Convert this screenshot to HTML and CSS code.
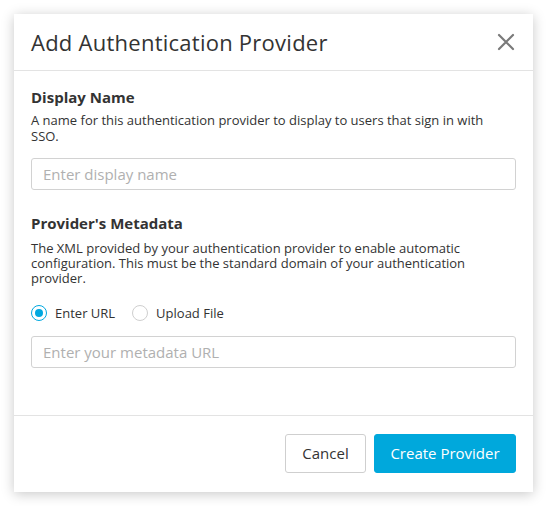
FILE: index.html
```html
<!DOCTYPE html>
<html>
<head>
<meta charset="utf-8">
<link rel="stylesheet" href="styles.css">
</head>
<body>
<div class="modal">
  <div class="modal-header">
    <h1 class="title">Add Authentication Provider</h1>
    <button class="close" aria-label="Close">
      <svg width="18" height="18" viewBox="0 0 18 18"><path d="M2 2 L16 16 M16 2 L2 16" stroke="#7a7a7a" stroke-width="2.2" stroke-linecap="round" fill="none"/></svg>
    </button>
  </div>
  <div class="modal-body">
    <div class="field">
      <div class="label">Display Name</div>
      <p class="help">A name for this authentication provider to display to users that sign in with SSO.</p>
      <input class="input" type="text" placeholder="Enter display name">
    </div>
    <div class="field second">
      <div class="label">Provider's Metadata</div>
      <p class="help">The XML provided by your authentication provider to enable automatic configuration. This must be the standard domain of your authentication provider.</p>
      <div class="radios">
        <label class="radio"><span class="dot checked"></span>Enter URL</label>
        <label class="radio"><span class="dot"></span>Upload File</label>
      </div>
      <input class="input" type="text" placeholder="Enter your metadata URL">
    </div>
  </div>
  <div class="modal-footer">
    <button class="btn btn-cancel">Cancel</button>
    <button class="btn btn-primary">Create Provider</button>
  </div>
</div>
</body>
</html>
```
FILE: styles.css
```css
* { box-sizing: border-box; }
html, body { margin: 0; padding: 0; background: #fff; }
body {
  font-family: "Open Sans", "Lato", sans-serif;
  color: #333;
  padding: 14px 15px 14px 14px;
}
.modal {
  width: 519px;
  height: 478px;
  background: #fff;
  box-shadow: 0 2px 12px rgba(0,0,0,0.22);
  display: flex;
  flex-direction: column;
}
.modal-header {
  height: 57px;
  border-bottom: 1px solid #e3e3e3;
  display: flex;
  align-items: center;
  justify-content: space-between;
  padding: 0 18px 0 17px;
}
.title {
  margin: 0;
  font-size: 22px;
  font-weight: 400;
  color: #333;
  letter-spacing: 0.25px;
}
.close {
  border: 0;
  background: none;
  padding: 0;
  width: 18px;
  height: 18px;
  display: flex;
}
.modal-body {
  flex: 1;
  padding: 16px 17px 0 17px;
}
.label {
  font-weight: 700;
  font-size: 15px;
  color: #333;
  line-height: 20px;
}
.help {
  margin: 6px 0 14px;
  padding-right: 20px;
  font-size: 13px;
  line-height: 15.5px;
  color: #333;
}
.input {
  display: block;
  width: 100%;
  height: 32px;
  border: 1px solid #d2d2d2;
  border-radius: 3px;
  padding: 0 11px;
  font-family: inherit;
  font-size: 15px;
  color: #333;
  outline: none;
}
.input::placeholder { color: #b0b0b0; }
.second { margin-top: 23px; }
.second .help { margin-top: 8px; margin-bottom: 19px; line-height: 15px; }
.radios {
  display: flex;
  gap: 17px;
  margin-bottom: 15px;
  font-size: 13px;
}
.radio { display: flex; align-items: center; gap: 8px; line-height: 16px; }
.dot {
  width: 16px; height: 16px;
  border: 1px solid #cfcfcf;
  border-radius: 50%;
  display: inline-flex;
  align-items: center;
  justify-content: center;
}
.dot.checked { border-color: #00a8e0; }
.dot.checked::after {
  content: "";
  width: 8px; height: 8px;
  border-radius: 50%;
  background: #00a8e0;
}
.modal-footer {
  height: 77px;
  border-top: 1px solid #e3e3e3;
  display: flex;
  justify-content: flex-end;
  align-items: center;
  gap: 8px;
  padding: 0 17px 1px;
}
.btn {
  height: 39px;
  border-radius: 3px;
  font-family: inherit;
  font-size: 15px;
  padding: 0 12px 1px;
}
.btn-cancel {
  background: #fff;
  border: 1px solid #cfcfcf;
  color: #333;
  width: 81px;
}
.btn-primary {
  background: #00a8dc;
  border: 1px solid #00a8dc;
  color: #fff;
  width: 142px;
}
```
